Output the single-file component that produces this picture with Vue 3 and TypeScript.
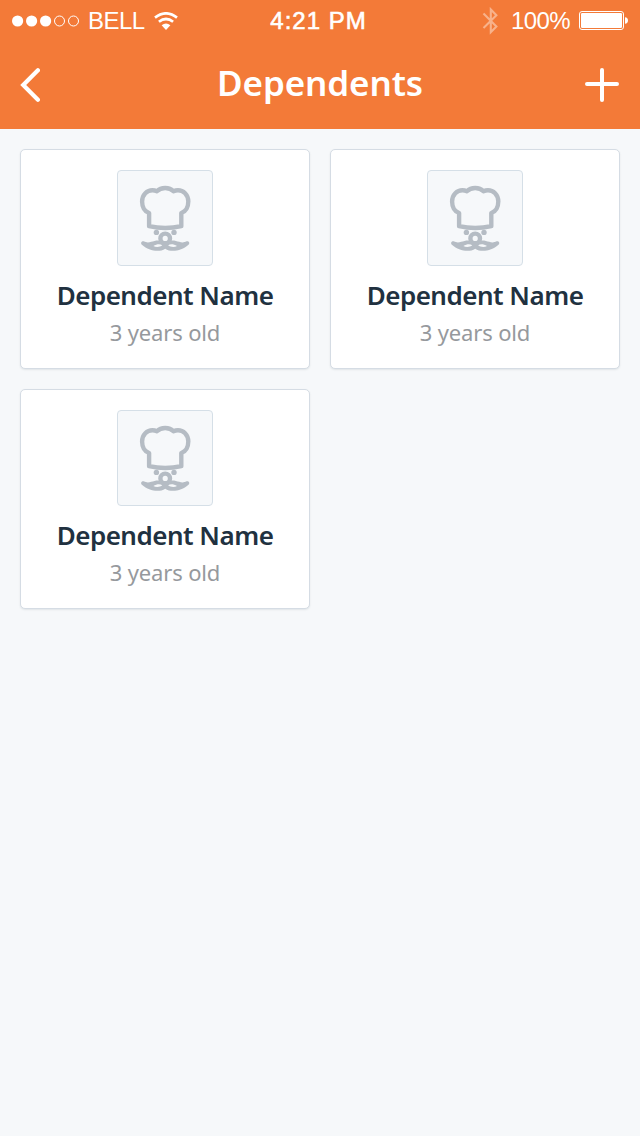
<script setup lang="ts">
interface Dependent {
  id: number
  name: string
  age: string
}

const dependents: Dependent[] = [
  { id: 1, name: 'Dependent Name', age: '3 years old' },
  { id: 2, name: 'Dependent Name', age: '3 years old' },
  { id: 3, name: 'Dependent Name', age: '3 years old' },
]
</script>

<template>
  <div class="screen">
    <header class="header">
      <div class="status">
        <div class="carrier">
          <svg class="signal" width="68" height="12" viewBox="0 0 68 12">
            <g fill="#fff">
              <circle cx="5.6" cy="6" r="5.6" /><circle cx="19.6" cy="6" r="5.6" /><circle cx="33.6" cy="6" r="5.6" />
            </g>
            <g fill="none" stroke="#fff" stroke-width="1">
              <circle cx="47.5" cy="6" r="5" /><circle cx="61.5" cy="6" r="5" />
            </g>
          </svg>
          <span class="bell">BELL</span>
          <svg class="wifi" width="24" height="18" viewBox="0 0 24 18">
            <g fill="none" stroke="#fff" stroke-width="2.7">
              <path d="M1 5.6Q12-2.9 23 5.6" />
              <path d="M4.9 9.8Q12 4.2 19.1 9.8" />
            </g>
            <path d="M7.6 13.2Q12 9.8 16.4 13.2L12 18Z" fill="#fff" />
          </svg>
        </div>
        <span class="time">4:21 PM</span>
        <div class="power">
          <svg class="bluetooth" width="16" height="28" viewBox="0 0 16 28">
            <path d="M1.5 6.4L14.4 19.6L8.8 25.2V2.4L14.4 8.2L1.5 21" fill="none" stroke="#fff" stroke-opacity=".42" stroke-width="2.1" />
          </svg>
          <span class="percent">100%</span>
          <svg class="battery" width="49" height="19" viewBox="0 0 49 19">
            <rect x=".5" y=".5" width="44" height="18" rx="2.5" fill="none" stroke="#fff" />
            <rect x="2" y="2" width="41" height="15" rx="1.2" fill="#fff" />
            <path d="M46 6.2Q49 6.4 49 9.5Q49 12.6 46 12.8Z" fill="#fff" />
          </svg>
        </div>
      </div>
      <nav class="nav">
        <button class="action" aria-label="Back">
          <svg width="20" height="34" viewBox="0 0 20 34">
            <path d="M17.9 2.3L3.2 17L17.9 31.7" fill="none" stroke="#fff" stroke-width="4.2" stroke-linecap="round" stroke-linejoin="miter" />
          </svg>
        </button>
        <h1 class="title">Dependents</h1>
        <button class="action add" aria-label="Add dependent">
          <svg width="35" height="34" viewBox="0 0 35 34">
            <path d="M17 2V32M2 16H32" fill="none" stroke="#fff" stroke-width="4" stroke-linecap="round" />
          </svg>
        </button>
      </nav>
    </header>

    <main class="grid">
      <article v-for="person in dependents" :key="person.id" class="card">
        <div class="avatar">
          <svg width="94" height="94" viewBox="1 1 94 94">
            <g fill="none" stroke="#b5bcc4" stroke-width="4.4" stroke-linejoin="round">
              <path d="M32.1 56.2V43C27.4 41.5 25.1 36.5 25.1 31.6C25.1 24.6 30.2 20.2 35.4 20.2C37 20.2 38.6 20.6 39.9 21.2C42 19 45 18 48.2 18C51.4 18 54.4 19 56.5 21.2C57.8 20.6 59.4 20.2 61 20.2C66.2 20.2 71.3 24.6 71.3 31.6C71.3 36.5 69 41.5 64.3 43V56.2Q48.2 59.9 32.1 56.2Z" />
              <circle cx="48.2" cy="68.4" r="4.8" />
            </g>
            <g fill="#b5bcc4">
              <circle cx="39.4" cy="62.4" r="2.7" />
              <circle cx="57" cy="62.4" r="2.7" />
              <path fill-rule="evenodd" d="M26.8 71.3C31 73.6 34 71.6 37.5 71C42 69.8 45.8 71 48.2 73.6C50.6 71 54.4 69.8 58.9 71C62.4 71.6 65.4 73.6 69.6 71.3C72.2 70.6 73.2 73.6 71.2 75C65 80.4 54.6 83 48.2 78.7C41.8 83 31.4 80.4 25.2 75C23.2 73.6 24.2 70.6 26.8 71.3ZM36.4 76C39 77.7 43.2 77.2 45.3 75.3C42.8 73.5 39.4 74.2 36.4 76ZM60 76C57.4 77.7 53.2 77.2 51.1 75.3C53.6 73.5 57 74.2 60 76Z" />
            </g>
          </svg>
        </div>
        <h2 class="name">{{ person.name }}</h2>
        <p class="age">{{ person.age }}</p>
      </article>
    </main>
  </div>
</template>

<style>
body {
  margin: 0;
  background: #f6f8fa;
}
</style>

<style scoped>
.screen {
  box-sizing: border-box;
  width: 640px;
  height: 1136px;
  overflow: hidden;
  background: #f6f8fa;
  font-family: "Noto Sans", "Open Sans", sans-serif;
}
svg {
  display: block;
  flex: none;
}
.header {
  height: 129px;
  background: #f37a38;
  color: #fff;
}
.status {
  display: grid;
  grid-template-columns: 1fr auto 1fr;
  align-items: center;
  box-sizing: border-box;
  height: 41px;
  padding: 1px 12px 0;
  font: 24px/40px "Liberation Sans", Arial, sans-serif;
  white-space: nowrap;
}
.carrier,
.power {
  display: flex;
  align-items: center;
}
.power {
  justify-content: flex-end;
}
.signal,
.wifi {
  margin-top: -1px;
}
.bell {
  margin-left: 8px;
  letter-spacing: -0.5px;
}
.wifi {
  margin-left: 9px;
}
.time {
  margin-right: 3px;
  letter-spacing: 1px;
  -webkit-text-stroke: 0.6px #fff;
}
.percent {
  margin: 0 9px 0 13px;
  letter-spacing: -0.6px;
}
.battery {
  margin-top: -1px;
}
.nav {
  display: grid;
  grid-template-columns: 60px 1fr 60px;
  align-items: center;
  height: 87px;
  padding: 0 20px;
}
.action {
  display: flex;
  padding: 0;
  border: 0;
  background: none;
}
.add {
  justify-content: flex-end;
}
.title {
  margin: 0 0 4px;
  font-size: 35px;
  font-weight: 600;
  line-height: 48px;
  letter-spacing: -0.1px;
  text-align: center;
}
.grid {
  display: grid;
  grid-template-columns: repeat(2, 290px);
  grid-auto-rows: 220px;
  gap: 20px;
  padding: 20px;
}
.card {
  box-sizing: border-box;
  display: flex;
  flex-direction: column;
  align-items: center;
  padding-top: 20px;
  border: 1px solid #d5dce4;
  border-radius: 5px;
  background: #fff;
  box-shadow: 0 1px 2px rgba(40, 55, 70, 0.1);
}
.avatar {
  border: 1px solid #d5dfe7;
  border-radius: 4px;
  background: #f6f8fa;
}
.name {
  margin: 11px 0 0;
  color: #213140;
  font-size: 26px;
  font-weight: 600;
  line-height: 36px;
  letter-spacing: -0.5px;
  white-space: nowrap;
}
.age {
  margin: 3px 0 0;
  color: #96999d;
  font-size: 22px;
  line-height: 32px;
  letter-spacing: -0.15px;
  white-space: nowrap;
}
</style>
